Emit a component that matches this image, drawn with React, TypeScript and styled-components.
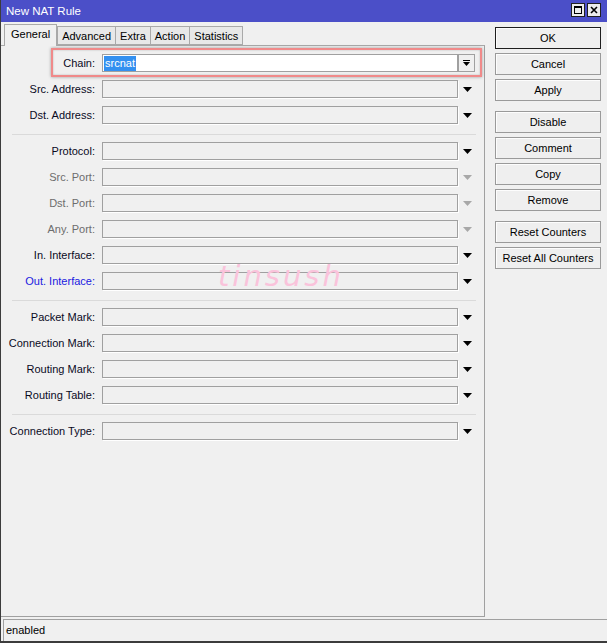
import React, { ReactElement } from "react";
import styled, { createGlobalStyle } from "styled-components";

type Tone = "normal" | "disabled" | "link";

interface IField {
  label: string;
  tone?: Tone;
}

const fieldGroups: IField[][] = [
  [{ label: "Src. Address" }, { label: "Dst. Address" }],
  [
    { label: "Protocol" },
    { label: "Src. Port", tone: "disabled" },
    { label: "Dst. Port", tone: "disabled" },
    { label: "Any. Port", tone: "disabled" },
    { label: "In. Interface" },
    { label: "Out. Interface", tone: "link" },
  ],
  [
    { label: "Packet Mark" },
    { label: "Connection Mark" },
    { label: "Routing Mark" },
    { label: "Routing Table" },
  ],
  [{ label: "Connection Type" }],
];

const tabs = ["General", "Advanced", "Extra", "Action", "Statistics"];

const buttonGroups: string[][] = [
  ["OK", "Cancel", "Apply"],
  ["Disable", "Comment", "Copy", "Remove"],
  ["Reset Counters", "Reset All Counters"],
];

const GlobalStyle = createGlobalStyle`
  html, body {
    margin: 0;
    padding: 0;
    background: #f0f0f0;
  }
  body {
    font-family: "Liberation Sans", Arial, sans-serif;
    font-size: 11px;
    color: #000;
  }
`;

const Window = styled.div`
  width: 607px;
  height: 643px;
  box-sizing: border-box;
  display: flex;
  flex-direction: column;
  background: #f0f0f0;
  border-left: 1px solid #3c3c3c;
  border-bottom: 2px solid #3c3c3c;
`;

const TitleBar = styled.div`
  height: 22px;
  flex: none;
  display: flex;
  align-items: center;
  justify-content: space-between;
  padding: 0 6px 0 5px;
  background: #4b4fc8;
  color: #fff;
  font-size: 11.5px;
`;

const TitleButtons = styled.div`
  display: flex;
  gap: 2px;
  margin-top: -2px;
`;

const TitleButton = styled.div`
  width: 12px;
  height: 12px;
  border: 1px solid #202020;
  background: #ececec;
  display: flex;
  align-items: center;
  justify-content: center;
`;

const Body = styled.div`
  flex: 1;
  display: flex;
  min-height: 0;
`;

const LeftSide = styled.div`
  width: 484px;
  display: flex;
  flex-direction: column;
  margin-bottom: 2px;
`;

const TabStrip = styled.div`
  height: 23px;
  flex: none;
  display: flex;
  align-items: flex-end;
  padding-left: 3px;
  position: relative;
  z-index: 1;
`;

const Tab = styled.div<{ $active?: boolean }>`
  box-sizing: border-box;
  height: ${(p) => (p.$active ? "22px" : "19px")};
  padding: 0 ${(p) => (p.$active ? "6px" : "4px")};
  margin-bottom: ${(p) => (p.$active ? "-1px" : "0")};
  display: flex;
  align-items: center;
  padding-bottom: ${(p) => (p.$active ? "3px" : "0")};
  border: 1px solid #a9a9a9;
  border-bottom: ${(p) => (p.$active ? "none" : "1px solid #a9a9a9")};
  margin-right: ${(p) => (p.$active ? "0" : "-1px")};
  background: ${(p) => (p.$active ? "#f0f0f0" : "#e8e8e8")};
`;

const Panel = styled.div`
  flex: 1;
  position: relative;
  box-sizing: border-box;
  padding-top: 4px;
  border-top: 1px solid #a9a9a9;
  border-right: 1px solid #a0a0a0;
  border-bottom: 1px solid #a0a0a0;
`;

const Row = styled.div`
  position: relative;
  height: 26px;
  display: grid;
  grid-template-columns: 101px 356px 18px;
  align-items: center;
`;

const Label = styled.div<{ $tone?: Tone }>`
  padding-right: 7px;
  text-align: right;
  white-space: nowrap;
  color: ${(p) =>
    p.$tone === "disabled" ? "#6d6d6d" : p.$tone === "link" ? "#1a1ae0" : "#0a0a1e"};
`;

const Field = styled.div`
  box-sizing: border-box;
  height: 18px;
  border: 1px solid #a0a0a0;
  box-shadow: 1px 1px 0 #fff;
`;

const Arrow = styled.div`
  display: flex;
  justify-content: center;
  align-items: center;
`;

const ComboText = styled.div`
  box-sizing: border-box;
  height: 18px;
  border: 1px solid #a0a0a0;
  background: #fff;
  display: flex;
  align-items: center;
  padding-left: 1px;
`;

const Selected = styled.span`
  background: #3390f0;
  color: #fff;
  padding: 0 1px;
  line-height: 15px;
`;

const ComboButton = styled.div`
  width: 17px;
  height: 18px;
  box-sizing: border-box;
  border: 1px solid #a0a0a0;
  background: #f0f0f0;
  display: flex;
  align-items: center;
  justify-content: center;
`;

const Highlight = styled.span`
  position: absolute;
  left: 50px;
  top: -2px;
  width: 431px;
  height: 29px;
  box-sizing: border-box;
  border: 2px solid #f08a8a;
  box-shadow: 0 0 3px rgba(0, 0, 0, 0.35), inset 0 0 2px rgba(0, 0, 0, 0.25);
  pointer-events: none;
`;

const Separator = styled.div`
  height: 1px;
  background: #dadada;
  margin: 6px 8px 3px 11px;
`;

const Watermark = styled.span`
  position: absolute;
  left: 217px;
  top: 213px;
  font-family: "DejaVu Sans", sans-serif;
  font-weight: 200;
  font-style: italic;
  font-size: 29px;
  letter-spacing: 3px;
  color: #fac3db;
  pointer-events: none;
`;

const ButtonColumn = styled.div`
  flex: 1;
  display: flex;
  flex-direction: column;
  padding: 5px 6px 0 10px;
  gap: 10px;
`;

const ButtonGroup = styled.div`
  display: flex;
  flex-direction: column;
  gap: 4px;
`;

const Button = styled.div<{ $default?: boolean }>`
  height: 22px;
  box-sizing: border-box;
  display: flex;
  align-items: center;
  justify-content: center;
  border: 1px solid ${(p) => (p.$default ? "#1e1e1e" : "#9a9a9a")};
  box-shadow: inset 1px 1px 0 #fdfdfd;
  background: #efefef;
`;

const StatusBar = styled.div`
  height: 22px;
  flex: none;
  box-sizing: border-box;
  margin-left: 2px;
  padding: 0 0 2px 2px;
  display: flex;
  align-items: center;
  border-top: 1px solid #a0a0a0;
  border-left: 1px solid #a0a0a0;
`;

const DownArrow = ({ disabled }: { disabled?: boolean }): ReactElement => (
  <svg width="9" height="5" viewBox="0 0 9 5">
    <polygon points="0,0 9,0 4.5,5" fill={disabled ? "#a8a8a8" : "#000"} />
  </svg>
);

const App = (): ReactElement => {
  return (
    <>
      <GlobalStyle />
      <Window>
        <TitleBar>
          <span>New NAT Rule</span>
          <TitleButtons>
            <TitleButton>
              <svg width="8" height="8" viewBox="0 0 8 8">
                <rect x="0.5" y="0.5" width="7" height="7" fill="none" stroke="#000" />
                <rect x="0" y="0" width="8" height="2" fill="#000" />
              </svg>
            </TitleButton>
            <TitleButton>
              <svg width="8" height="8" viewBox="0 0 8 8">
                <path d="M1 1 L7 7 M7 1 L1 7" stroke="#000" strokeWidth="1.6" />
              </svg>
            </TitleButton>
          </TitleButtons>
        </TitleBar>
        <Body>
          <LeftSide>
            <TabStrip>
              {tabs.map((tab, index) => (
                <Tab key={tab} $active={index === 0}>
                  {tab}
                </Tab>
              ))}
            </TabStrip>
            <Panel>
              <Row>
                <Label>Chain:</Label>
                <ComboText>
                  <Selected>srcnat</Selected>
                </ComboText>
                <ComboButton>
                  <svg width="7" height="7" viewBox="0 0 7 7">
                    <rect x="0" y="0" width="7" height="1" fill="#000" />
                    <polygon points="0,2 7,2 3.5,6" fill="#000" />
                  </svg>
                </ComboButton>
                <Highlight />
              </Row>
              {fieldGroups.map((group, groupIndex) => (
                <React.Fragment key={groupIndex}>
                  {groupIndex > 0 && <Separator />}
                  {group.map((field) => (
                    <Row key={field.label}>
                      <Label $tone={field.tone}>{field.label}:</Label>
                      <Field />
                      <Arrow>
                        <DownArrow disabled={field.tone === "disabled"} />
                      </Arrow>
                    </Row>
                  ))}
                </React.Fragment>
              ))}
              <Watermark>tinsush</Watermark>
            </Panel>
          </LeftSide>
          <ButtonColumn>
            {buttonGroups.map((group, groupIndex) => (
              <ButtonGroup key={groupIndex}>
                {group.map((label) => (
                  <Button key={label} $default={label === "OK"}>
                    {label}
                  </Button>
                ))}
              </ButtonGroup>
            ))}
          </ButtonColumn>
        </Body>
        <StatusBar>enabled</StatusBar>
      </Window>
    </>
  );
};

export default App;
